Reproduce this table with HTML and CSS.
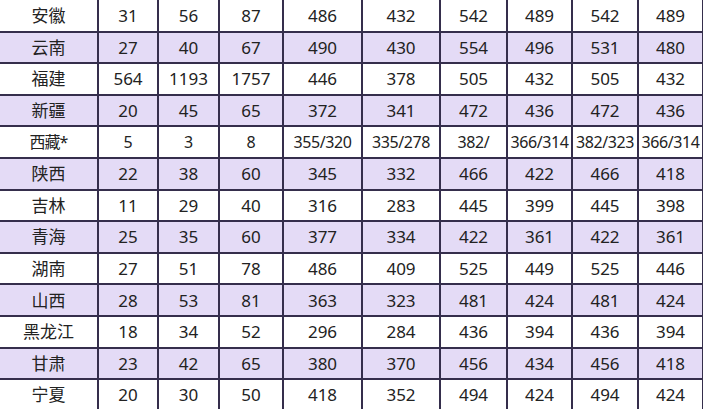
FILE: index.html
```html
<!DOCTYPE html>
<html lang="zh">
<head>
<meta charset="utf-8">
<link rel="stylesheet" href="styles.css">
</head>
<body>
<table class="score">
<colgroup>
<col class="c0"><col class="c1"><col class="c2"><col class="c3"><col class="c4"><col class="c5"><col class="c6"><col class="c7"><col class="c8"><col class="c9">
</colgroup>
<tbody>
<tr><td>安徽</td><td>31</td><td>56</td><td>87</td><td>486</td><td>432</td><td>542</td><td>489</td><td>542</td><td>489</td></tr>
<tr class="alt"><td>云南</td><td>27</td><td>40</td><td>67</td><td>490</td><td>430</td><td>554</td><td>496</td><td>531</td><td>480</td></tr>
<tr><td>福建</td><td>564</td><td>1193</td><td>1757</td><td>446</td><td>378</td><td>505</td><td>432</td><td>505</td><td>432</td></tr>
<tr class="alt"><td>新疆</td><td>20</td><td>45</td><td>65</td><td>372</td><td>341</td><td>472</td><td>436</td><td>472</td><td>436</td></tr>
<tr class="tight"><td>西藏*</td><td>5</td><td>3</td><td>8</td><td>355/320</td><td>335/278</td><td>382/</td><td>366/314</td><td>382/323</td><td>366/314</td></tr>
<tr class="alt"><td>陕西</td><td>22</td><td>38</td><td>60</td><td>345</td><td>332</td><td>466</td><td>422</td><td>466</td><td>418</td></tr>
<tr><td>吉林</td><td>11</td><td>29</td><td>40</td><td>316</td><td>283</td><td>445</td><td>399</td><td>445</td><td>398</td></tr>
<tr class="alt"><td>青海</td><td>25</td><td>35</td><td>60</td><td>377</td><td>334</td><td>422</td><td>361</td><td>422</td><td>361</td></tr>
<tr><td>湖南</td><td>27</td><td>51</td><td>78</td><td>486</td><td>409</td><td>525</td><td>449</td><td>525</td><td>446</td></tr>
<tr class="alt"><td>山西</td><td>28</td><td>53</td><td>81</td><td>363</td><td>323</td><td>481</td><td>424</td><td>481</td><td>424</td></tr>
<tr><td>黑龙江</td><td>18</td><td>34</td><td>52</td><td>296</td><td>284</td><td>436</td><td>394</td><td>436</td><td>394</td></tr>
<tr class="alt"><td>甘肃</td><td>23</td><td>42</td><td>65</td><td>380</td><td>370</td><td>456</td><td>434</td><td>456</td><td>418</td></tr>
<tr><td>宁夏</td><td>20</td><td>30</td><td>50</td><td>418</td><td>352</td><td>494</td><td>424</td><td>494</td><td>424</td></tr>
</tbody>
</table>
</body>
</html>
```

FILE: styles.css
```css
html, body {
  margin: 0;
  padding: 0;
  background: #ffffff;
  overflow: hidden;
}

.score {
  border-collapse: collapse;
  table-layout: fixed;
  width: 704px;
  margin-top: -1px;
  margin-left: -2px;
  font-family: "Noto Sans", "Noto Sans CJK SC", sans-serif;
  font-size: 17px;
  color: #222222;
}

.c0 { width: 99px; }
.c1 { width: 60px; }
.c2 { width: 61px; }
.c3 { width: 64px; }
.c4 { width: 79px; }
.c5 { width: 78px; }
.c6 { width: 67px; }
.c7 { width: 65px; }
.c8 { width: 66px; }
.c9 { width: 65px; }

.score td {
  border: 2px solid #352e4c;
  height: 29.6px;
  padding: 0;
  text-align: center;
  vertical-align: middle;
  white-space: nowrap;
  line-height: 1;
}

.score tr:first-child td {
  border-top-color: transparent;
}

.score td:first-child {
  border-left-color: transparent;
}

.score tr.alt td {
  background: #e4dbf6;
}

.score tr.tight td {
  font-size: 16px;
  letter-spacing: -0.4px;
}

.score tr.tight td:first-child {
  font-size: 16px;
  letter-spacing: -1px;
}
```
